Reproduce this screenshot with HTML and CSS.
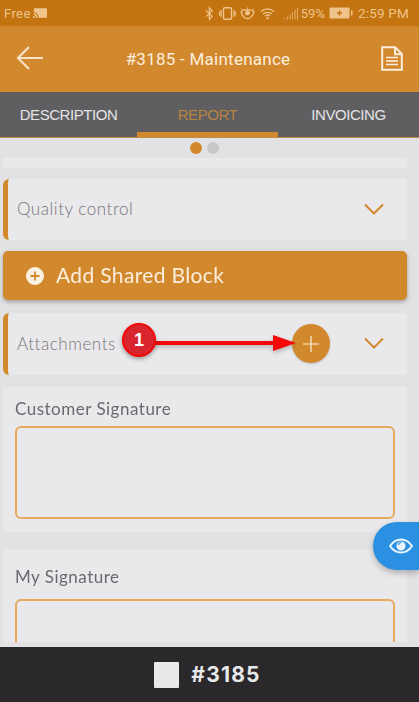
FILE: index.html
```html
<!DOCTYPE html>
<html lang="en">
<head>
<meta charset="utf-8">
<title>#3185 - Maintenance</title>
<link rel="stylesheet" href="styles.css">
</head>
<body>
<div class="app">
  <div class="status">
    <div class="status-left">
      <span>Free</span>
      <svg class="ic-cast" viewBox="0 0 16 11"><rect x="1" y="0" width="15" height="11" rx="1" fill="#f0c68e"/><path d="M0 5a6 6 0 0 1 6 6M0 8a3 3 0 0 1 3 3" fill="none" stroke="#c3730f" stroke-width="1.2"/><circle cx="0.8" cy="10.2" r="1" fill="#f0c68e"/></svg>
    </div>
    <div class="status-right">
      <svg class="ic-bt" viewBox="0 0 10 15"><path d="M1 4l7 6.500L4.800 14V1L8 4.500 1 11" fill="none" stroke="#f0c68e" stroke-width="1.300"/></svg>
      <svg class="ic-vib" viewBox="0 0 17 13"><rect x="4.500" y="0.700" width="8" height="11.600" rx="1.200" fill="none" stroke="#f0c68e" stroke-width="1.400"/><path d="M2 3v7M0.500 4.500v4M15 3v7M16.500 4.500v4" stroke="#f0c68e" stroke-width="1.200"/></svg>
      <svg class="ic-eye" viewBox="0 0 16 13"><path d="M1 4.500C4 1.700 12 1.700 15 4.500 13.500 9.500 10.500 12 8 12S2.500 9.500 1 4.500z" fill="none" stroke="#f0c68e" stroke-width="1.400"/><circle cx="8" cy="6" r="2.600" fill="#f0c68e"/><path d="M1 1l2 2M15 1l-2 2M8 0v1.500" stroke="#f0c68e" stroke-width="1"/></svg>
      <svg class="ic-wifi" viewBox="0 0 16 13"><path d="M1 4.500a10 10 0 0 1 14 0M3.300 7a7 7 0 0 1 9.400 0M5.500 9.300a3.600 3.600 0 0 1 5 0" fill="none" stroke="#f0c68e" stroke-width="1.300"/><circle cx="8" cy="11.500" r="1.200" fill="#f0c68e"/></svg>
      <svg class="ic-sig" viewBox="0 0 14 13"><path d="M1 11v1.500M3.500 9.500v3M6 7.500v5M8.500 5v7.500M11 2.500v10M13.500 0.500v12" stroke="#e0a860" stroke-width="1.200"/></svg>
      <span class="pct">59%</span>
      <svg class="ic-bat" viewBox="0 0 24 12"><rect x="0.500" y="0.500" width="20" height="11" rx="1" fill="#eec48c"/><rect x="22" y="3.500" width="1.500" height="5" fill="#f0c68e"/><path d="M10.500 3.500v5M8 6h5" stroke="#c3730f" stroke-width="1.500"/></svg>
      <span class="clock">2:59 PM</span>
    </div>
  </div>

  <header class="topbar">
    <svg class="ic-back" viewBox="0 0 28 26"><path d="M27 13H3M13 2L2 13l11 11" fill="none" stroke="#f8e3c6" stroke-width="2.200"/></svg>
    <h1 class="title">#3185 - Maintenance</h1>
    <svg class="ic-doc" viewBox="0 0 22 25"><path d="M1.200 1.200h13l6.600 6.600v16H1.200zM14 1.200v7h6.800" fill="none" stroke="#fbeedd" stroke-width="2"/><path d="M5 11.500h12M5 15h12M5 18.500h12" stroke="#fbeedd" stroke-width="1.500"/></svg>
  </header>

  <nav class="tabs">
    <div class="tab tab-first">DESCRIPTION</div>
    <div class="tab tab-active">REPORT</div>
    <div class="tab">INVOICING</div>
  </nav>

  <main class="content">
    <div class="pager"><span class="dot dot-on"></span><span class="dot"></span></div>
    <div class="strip"></div>

    <section class="card accordion">
      <span class="acc-title">Quality control</span>
      <svg class="chev" viewBox="0 0 20 12"><path d="M1 1.500l9 9 9-9" fill="none" stroke="#d2892e" stroke-width="2"/></svg>
    </section>

    <button class="add-block">
      <svg class="ic-plus" viewBox="0 0 18 18"><circle cx="9" cy="9" r="9" fill="#fbf1e2"/><path d="M9 4.500v9M4.500 9h9" stroke="#d2892e" stroke-width="1.800"/></svg>
      <span>Add Shared Block</span>
    </button>

    <section class="card accordion attachments">
      <span class="acc-title">Attachments</span>
      <span class="round-add"><svg viewBox="0 0 16 16"><path d="M8 0v16M0 8h16" stroke="#fbeedd" stroke-width="1.200"/></svg></span>
      <svg class="chev" viewBox="0 0 20 12"><path d="M1 1.500l9 9 9-9" fill="none" stroke="#d2892e" stroke-width="2"/></svg>
      <svg class="callout-arrow" viewBox="0 0 146 20"><path d="M0 8h123V2l23 8-23 8v-6H0z" fill="#f40808"/></svg>
      <span class="callout-badge">1</span>
    </section>

    <section class="card sign">
      <div class="sign-label">Customer Signature</div>
      <div class="sign-box"></div>
    </section>

    <section class="card sign sign-cut">
      <div class="sign-label">My Signature</div>
      <div class="sign-box"></div>
    </section>
    <div class="fab"><svg viewBox="0 0 24 16"><path d="M1 8C4 3.500 8 1.500 12 1.500S20 3.500 23 8c-3 4.500-7 6.500-11 6.500S4 12.500 1 8z" fill="none" stroke="#e9f4fd" stroke-width="2"/><circle cx="12" cy="8" r="4.500" fill="#e9f4fd"/><path d="M9.500 7a3 3 0 0 1 3-2.500" stroke="#2b90e2" stroke-width="1.200" fill="none"/></svg></div>
  </main>

  <footer class="bottom">
    <span class="swatch"></span>
    <span class="bottom-id">#3185</span>
  </footer>
</div>
</body>
</html>
```

FILE: styles.css
```css
* { box-sizing: border-box; }
html, body { margin: 0; padding: 0; height: 100%; }
body { overflow: hidden; background: #e2e1e3; }
.app { width: 419px; height: 702px; display: flex; flex-direction: column; font-family: "Roboto", sans-serif; filter: blur(.35px); }

.status { height: 26px; flex: none; background: #c3730f; color: #edc48c; display: flex; justify-content: space-between; align-items: center; padding: 0 10px 0 4px; font-size: 13px; }
.status-left { display: flex; align-items: center; gap: 2px; font-size: 13px; letter-spacing: .4px; }
.status-right { display: flex; align-items: center; }
.ic-cast { width: 14px; height: 10px; }
.ic-bt { width: 9px; height: 15px; margin-right: 5px; }
.ic-vib { width: 17px; height: 13px; margin-right: 4px; }
.ic-eye { width: 15px; height: 13px; margin-right: 5px; }
.ic-wifi { width: 15px; height: 13px; margin-right: 9px; }
.ic-sig { width: 14px; height: 13px; margin-right: 3px; }
.pct { margin-right: 4px; font-size: 13px; }
.ic-bat { width: 24px; height: 12px; margin-right: 5px; }
.clock { font-size: 13.500px; letter-spacing: .2px; }

.topbar { height: 66px; flex: none; background: #d2892e; display: flex; align-items: center; justify-content: space-between; padding: 0 5px 0 16px; }
.ic-back { width: 28px; height: 26px; margin-bottom: 2px; }
.title { margin: 0 9px 0 0; font-size: 17px; font-weight: 400; color: #fbeedd; letter-spacing: .25px; }
.ic-doc { width: 22px; height: 25px; margin: 0 11px 2px 0; }

.tabs { height: 46px; flex: none; background: #5f5f62; display: flex; border-bottom: 1px solid #c28a45; }
.tab { flex: 1; display: flex; align-items: center; justify-content: center; font-family: "Liberation Sans", sans-serif; font-size: 15px; letter-spacing: -.45px; color: #e4e4e6; }
.tab-first { flex: 0 0 137px; }
.tab-active { color: #b98340; border-bottom: 5px solid #d2892e; padding-top: 5px; flex: 0 0 141px; }

.content { flex: 1; min-height: 0; overflow: hidden; position: relative; padding: 0 12px 0 3px; display: flex; flex-direction: column; font-family: "Lato", sans-serif; }
.pager { height: 20px; flex: none; display: flex; justify-content: center; align-items: center; gap: 5px; padding-right: 1px; }
.dot { width: 12px; height: 12px; border-radius: 50%; background: #c8c8ca; }
.dot-on { background: #d2892e; }
.strip { height: 10px; flex: none; background: #e9e8ea; margin-bottom: 11px; }

.card { background: #e9e8ea; flex: none; }
.accordion { height: 61px; display: flex; align-items: center; border-left: 5px solid #d2892e; border-radius: 6px 0 0 6px; padding: 0 0 2px 9px; position: relative; }
.acc-title { font-size: 17px; font-weight: 300; color: #77767a; letter-spacing: .55px; }
.chev { width: 20px; height: 12px; position: absolute; right: 23px; top: 24px; }

.add-block { height: 49px; flex: none; margin: 11px 0 13px; border: 0; border-radius: 5px; background: #d2892e; box-shadow: 0 2px 4px rgba(0, 0, 0, .3); display: flex; align-items: center; gap: 12px; padding: 0 0 2px 23px; font-family: "Lato", sans-serif; font-size: 21px; font-weight: 400; letter-spacing: .35px; color: #fbeedd; }
.ic-plus { width: 18px; height: 18px; margin-top: 2px; }

.attachments { height: 62px; margin-bottom: 12px; }
.round-add { position: absolute; left: 284px; top: 11px; width: 38px; height: 39px; border-radius: 50%; background: #d2892e; display: flex; align-items: center; justify-content: center; z-index: 1; box-shadow: 0 1px 2px rgba(0, 0, 0, .2); }
.round-add svg { width: 16px; height: 16px; }
.callout-arrow { position: absolute; left: 142px; top: 20px; width: 146px; height: 20px; z-index: 2; filter: drop-shadow(0 2px 2px rgba(0, 0, 0, .25)); }
.callout-badge { position: absolute; left: 114px; top: 10px; width: 34px; height: 34px; border-radius: 50%; background: #d9262e; border: 2px solid #f40808; color: #fff; font-family: "Liberation Sans", sans-serif; font-size: 18px; font-weight: 700; display: flex; align-items: center; justify-content: center; z-index: 3; box-shadow: 0 2px 4px rgba(0, 0, 0, .35); }

.sign { height: 145px; padding: 9px 12px 0; margin-bottom: 17px; }
.sign-label { font-size: 17px; font-weight: 400; color: #6a6a6e; letter-spacing: .5px; height: 30px; line-height: 26px; }
.sign-box { height: 93px; border: 2px solid #e3aa60; border-radius: 6px; }
.sign-cut { height: 93px; overflow: hidden; margin-bottom: 0; padding-top: 15px; }
.sign-cut .sign-label { height: 35px; }

.fab { position: absolute; right: 0; top: 384px; width: 46px; height: 48px; background: #2b90e2; border-radius: 24px 0 0 24px; display: flex; align-items: center; justify-content: flex-end; padding-right: 6px; box-shadow: 0 3px 6px rgba(0, 0, 0, .25); z-index: 4; }
.fab svg { width: 24px; height: 16px; }

.bottom { height: 55px; flex: none; background: #2a282b; display: flex; align-items: center; justify-content: center; gap: 12px; padding-right: 4px; position: relative; z-index: 5; }
.swatch { width: 25px; height: 26px; background: #e9e8ea; border-radius: 1px; }
.bottom-id { font-family: "Inter", sans-serif; font-size: 21px; font-weight: 700; color: #e9e8ea; letter-spacing: 1.2px; }
```
